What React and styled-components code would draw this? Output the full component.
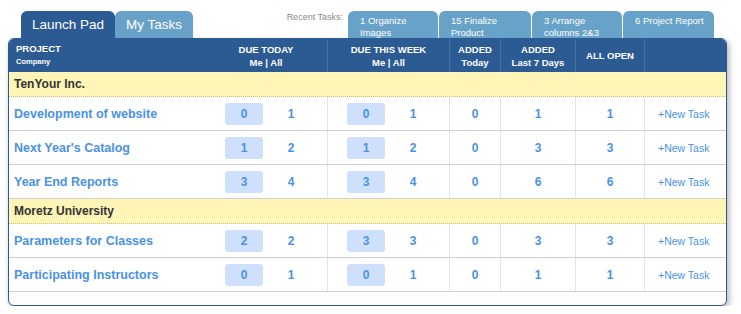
import React from 'react';
import styled, { createGlobalStyle } from 'styled-components';

const GlobalStyle = createGlobalStyle`
  body {
    margin: 0;
    background: #fff;
    font-family: "Liberation Sans", Arial, sans-serif;
  }
`;

const COLS = '196px 122px 122px 51px 75px 69px 1fr';
const DARK = '#2c5a93';
const LIGHT_TAB = '#68a2c8';
const LINK = '#4a92e4';

const recentTasks = [
  { label: '1 Organize Images', w: 90 },
  { label: '15 Finalize Product', w: 92 },
  { label: '3 Arrange columns 2&3', w: 90 },
  { label: '6 Project Report', w: 91 },
];

const groups = [
  {
    company: 'TenYour Inc.',
    projects: [
      { name: 'Development of website', today: [0, 1], week: [0, 1], added: 0, last7: 1, open: 1 },
      { name: "Next Year's Catalog", today: [1, 2], week: [1, 2], added: 0, last7: 3, open: 3 },
      { name: 'Year End Reports', today: [3, 4], week: [3, 4], added: 0, last7: 6, open: 6 },
    ],
  },
  {
    company: 'Moretz University',
    projects: [
      { name: 'Parameters for Classes', today: [2, 2], week: [3, 3], added: 0, last7: 3, open: 3 },
      { name: 'Participating Instructors', today: [0, 1], week: [0, 1], added: 0, last7: 1, open: 1 },
    ],
  },
];

const Page = styled.div`
  width: 719px;
  padding: 11px 0 0 8px;
`;

const TopBar = styled.div`
  display: flex;
  justify-content: space-between;
  align-items: flex-end;
  height: 27px;
  padding: 0 13px;
`;

const Tabs = styled.div`
  display: flex;
`;

const MainTab = styled.div`
  width: ${(p) => p.$w}px;
  height: 27px;
  line-height: 27px;
  text-align: center;
  font-size: 13.5px;
  color: #fff;
  background: ${(p) => (p.$active ? DARK : LIGHT_TAB)};
  border-radius: 6px 6px 0 0;
`;

const Recent = styled.div`
  display: flex;
  align-items: flex-start;
  height: 27px;
`;

const RecentLabel = styled.span`
  font-size: 9px;
  color: #8a8a8a;
  padding-top: 1px;
  margin-right: 4px;
`;

const RecentTab = styled.div`
  box-sizing: border-box;
  width: ${(p) => p.$w}px;
  height: 27px;
  padding: 4px 6px 0 12px;
  margin-left: 1px;
  font-size: 9.5px;
  line-height: 12px;
  color: #fff;
  background: ${LIGHT_TAB};
  border-radius: 6px 6px 0 0;
  overflow: hidden;
`;

const Panel = styled.div`
  border: 1px solid ${DARK};
  border-radius: 6px;
  background: #fff;
  overflow: hidden;
  padding-bottom: 13px;
  box-shadow: 2px 3px 6px rgba(0, 0, 0, 0.3);
`;

const HeaderRow = styled.div`
  display: grid;
  grid-template-columns: ${COLS};
  height: 33px;
  background: ${DARK};
`;

const HeadCell = styled.div`
  display: flex;
  flex-direction: column;
  justify-content: center;
  align-items: ${(p) => (p.$left ? 'flex-start' : 'center')};
  padding-left: ${(p) => (p.$left ? '7px' : '0')};
  border-left: ${(p) => (p.$divider ? '1px solid #4470a6' : 'none')};
  color: #fff;
  font-weight: bold;
  font-size: 9.5px;
  line-height: 13px;
  text-align: center;
`;

const SubHead = styled.span`
  font-size: 7.5px;
  line-height: 14px;
`;

const GroupRow = styled.div`
  height: 24px;
  line-height: 24px;
  padding-left: 5px;
  background: #fef5b7;
  border-bottom: 1px dotted #cabf85;
  font-weight: bold;
  font-size: 12px;
  color: #333;
`;

const DataRow = styled.div`
  display: grid;
  grid-template-columns: ${COLS};
  height: 33px;
  border-bottom: 1px solid #cfcfcf;
`;

const ProjectCell = styled.div`
  display: flex;
  align-items: center;
  padding-left: 5px;
  font-weight: bold;
  font-size: 12.5px;
  color: ${LINK};
  white-space: nowrap;
`;

const DueCell = styled.div`
  display: flex;
  align-items: center;
  padding-left: ${(p) => (p.$divider ? '19px' : '20px')};
  border-left: ${(p) => (p.$divider ? '1px solid #e4e4e4' : 'none')};
`;

const Badge = styled.div`
  display: flex;
  align-items: center;
  justify-content: center;
  width: 38px;
  height: 22px;
  border-radius: 3px;
  background: #cfe0fc;
  font-weight: bold;
  font-size: 12px;
  color: ${LINK};
`;

const Count = styled.span`
  width: 56px;
  text-align: center;
  font-weight: bold;
  font-size: 12px;
  color: ${LINK};
`;

const NumCell = styled.div`
  display: flex;
  align-items: center;
  justify-content: center;
  border-left: 1px solid #e4e4e4;
  font-weight: bold;
  font-size: 12px;
  color: ${LINK};
`;

const NewTaskCell = styled.div`
  display: flex;
  align-items: center;
  padding-left: 13px;
  border-left: 1px solid #e4e4e4;
  font-size: 10.5px;
  color: ${LINK};
`;

const Due = ({ values, divider }) => (
  <DueCell $divider={divider}>
    <Badge>{values[0]}</Badge>
    <Count>{values[1]}</Count>
  </DueCell>
);

export default function App() {
  return (
    <Page>
      <GlobalStyle />
      <TopBar>
        <Tabs>
          <MainTab $active $w={94}>Launch Pad</MainTab>
          <MainTab $w={78}>My Tasks</MainTab>
        </Tabs>
        <Recent>
          <RecentLabel>Recent Tasks:</RecentLabel>
          {recentTasks.map((t) => (
            <RecentTab key={t.label} $w={t.w}>
              {t.label}
            </RecentTab>
          ))}
        </Recent>
      </TopBar>
      <Panel>
        <HeaderRow>
          <HeadCell $left>
            PROJECT
            <SubHead>Company</SubHead>
          </HeadCell>
          <HeadCell>
            DUE TODAY
            <br />
            Me | All
          </HeadCell>
          <HeadCell $divider>
            DUE THIS WEEK
            <br />
            Me | All
          </HeadCell>
          <HeadCell $divider>
            ADDED
            <br />
            Today
          </HeadCell>
          <HeadCell $divider>
            ADDED
            <br />
            Last 7 Days
          </HeadCell>
          <HeadCell $divider>ALL OPEN</HeadCell>
          <HeadCell $divider />
        </HeaderRow>
        {groups.map((g) => (
          <React.Fragment key={g.company}>
            <GroupRow>{g.company}</GroupRow>
            {g.projects.map((p) => (
              <DataRow key={p.name}>
                <ProjectCell>{p.name}</ProjectCell>
                <Due values={p.today} />
                <Due values={p.week} divider />
                <NumCell>{p.added}</NumCell>
                <NumCell>{p.last7}</NumCell>
                <NumCell>{p.open}</NumCell>
                <NewTaskCell>+New Task</NewTaskCell>
              </DataRow>
            ))}
          </React.Fragment>
        ))}
      </Panel>
    </Page>
  );
}
